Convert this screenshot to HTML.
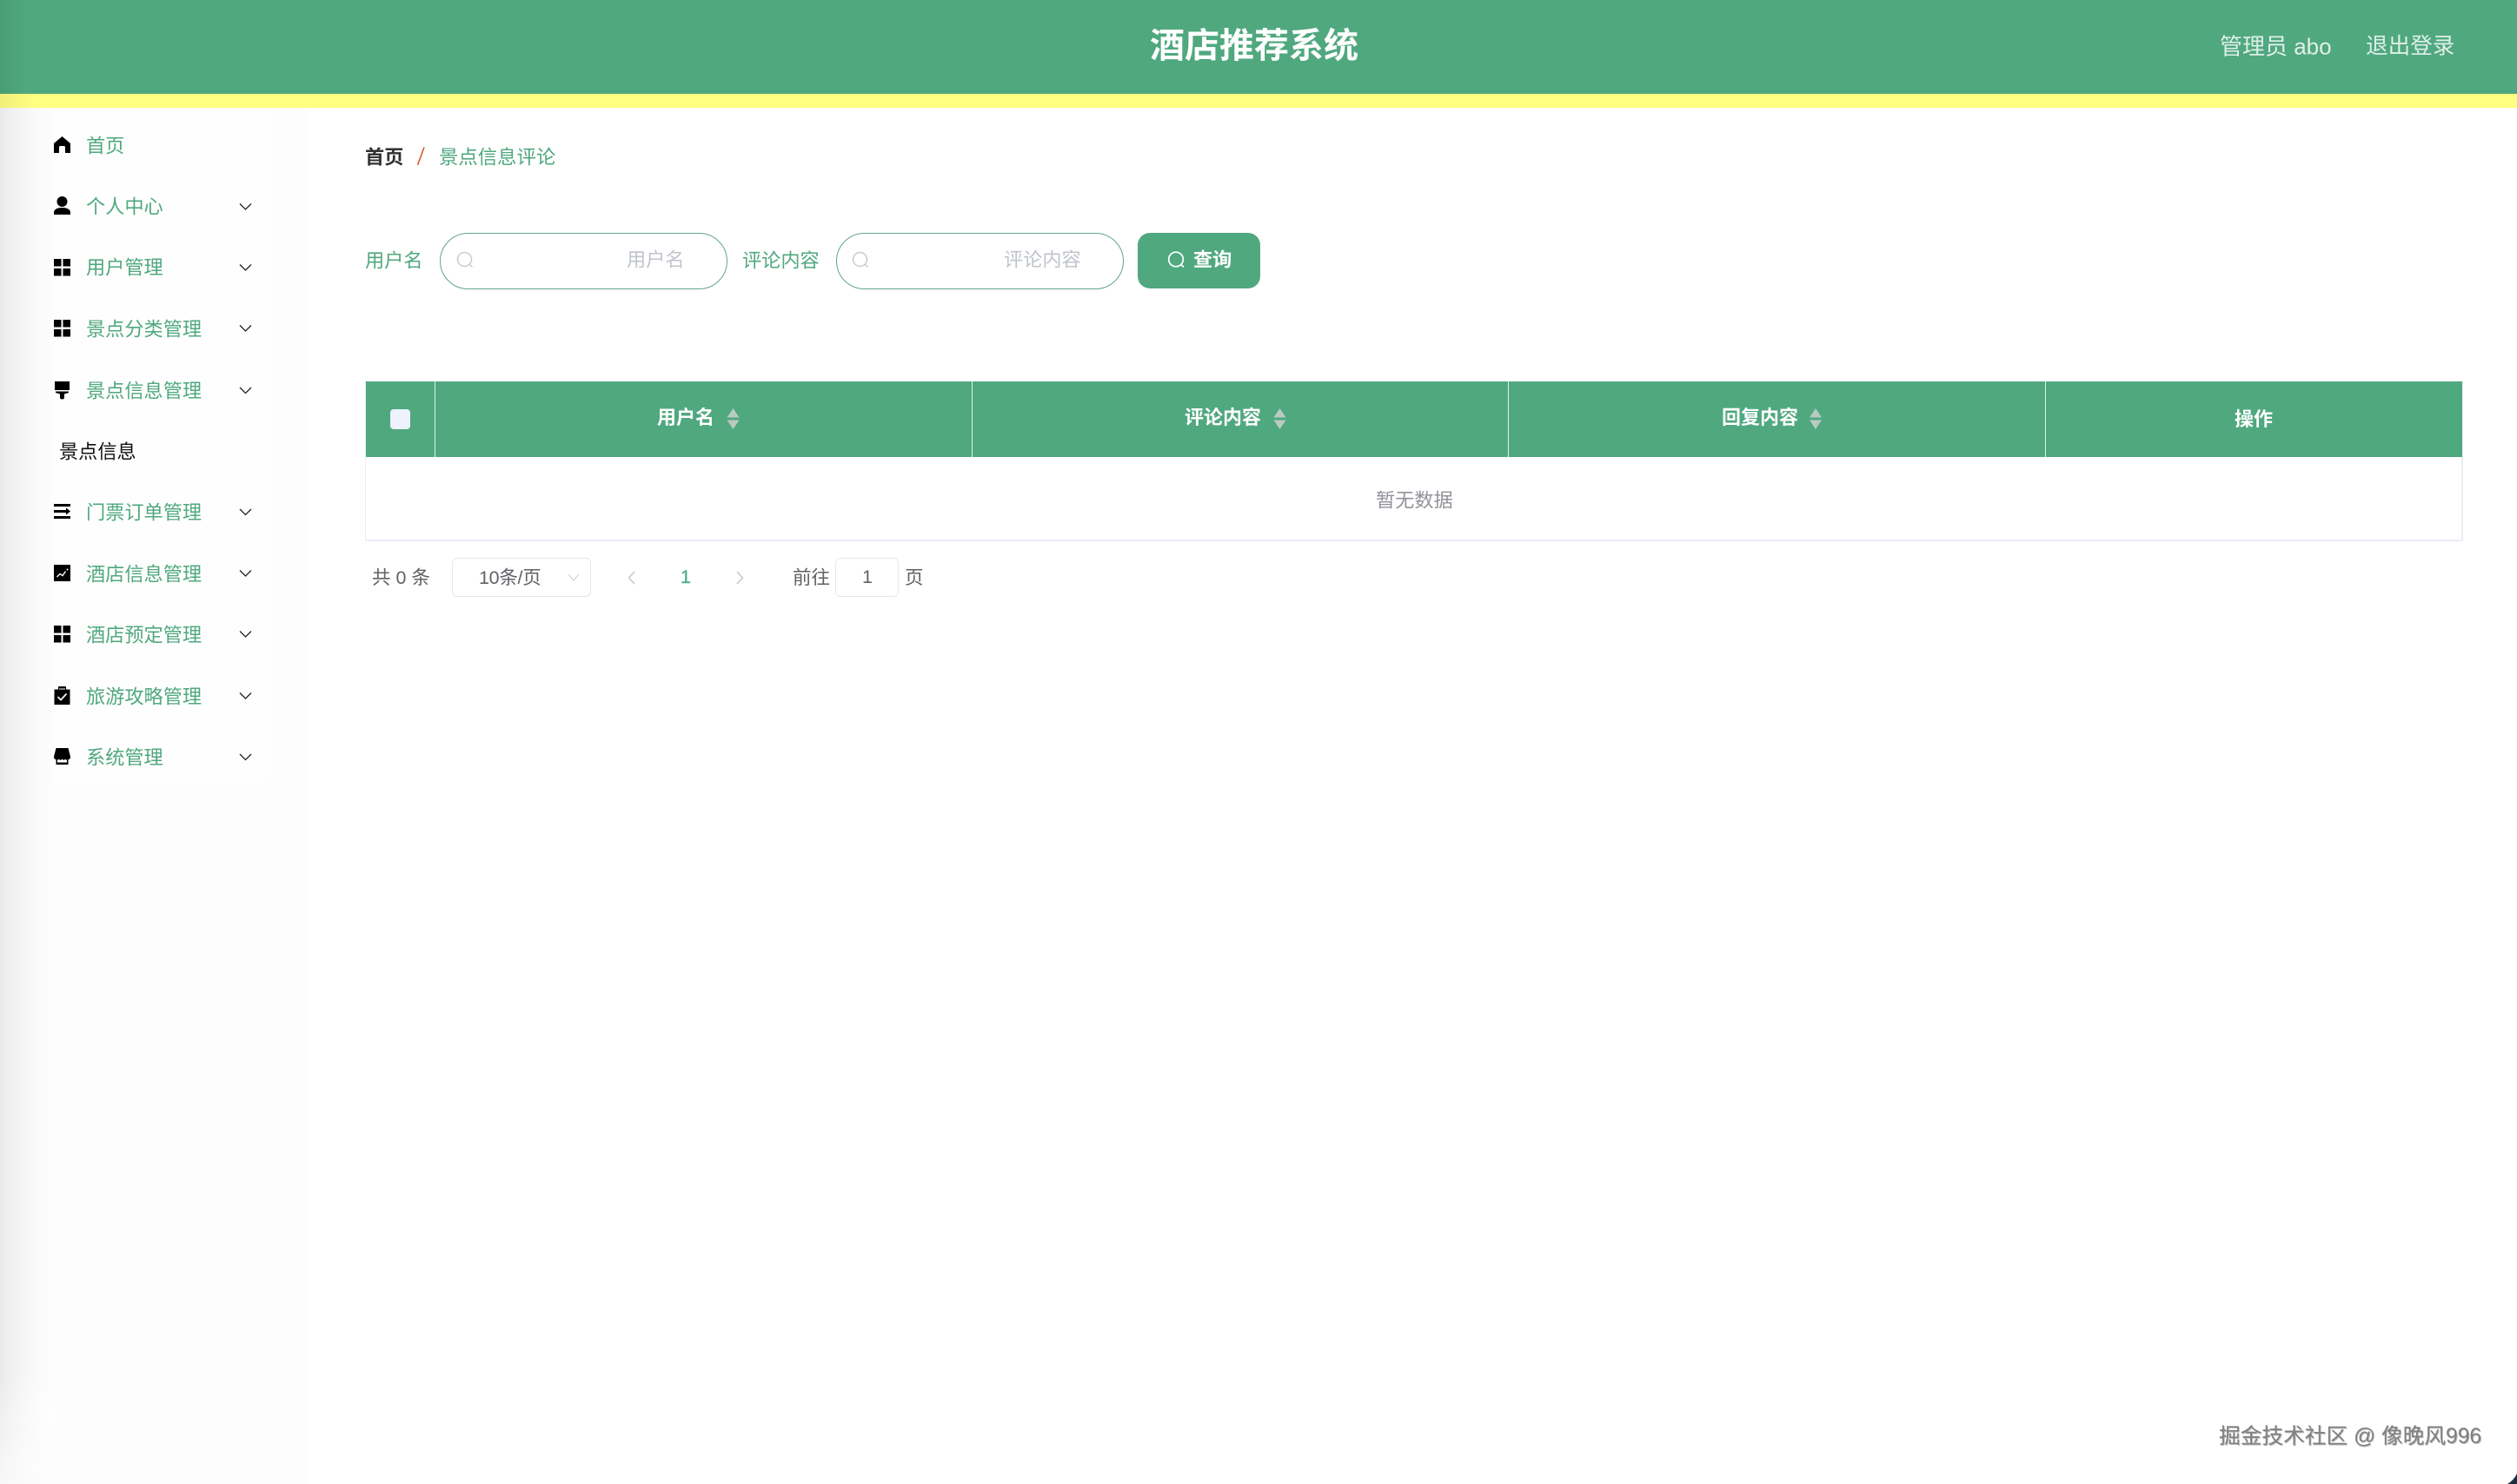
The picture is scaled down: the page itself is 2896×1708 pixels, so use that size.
<!DOCTYPE html>
<html lang="zh-CN">
<head>
<meta charset="utf-8">
<title>酒店推荐系统</title>
<style>
html,body{margin:0;padding:0;background:#fff}
body{position:relative;width:2896px;height:1708px;overflow:hidden;font-family:"Liberation Sans","Noto Sans CJK SC",sans-serif;background:#fdfdfd}
.t{position:absolute;white-space:nowrap;transform:translateY(calc(-50% + 2px));line-height:1.2}
.box{position:absolute;box-sizing:border-box}
svg{position:absolute;overflow:visible}
.m{left:99px;font-size:22.2px;color:#50a87f}
.th{color:#fff;font-weight:700;font-size:22px}
.g{font-size:21.5px;color:#606266}
</style>
</head>
<body>
<div class="box" style="left:0;top:124px;width:64px;height:1584px;background:linear-gradient(90deg,#e9e9e9 0,#f1f1f1 14px,#f8f8f8 34px,#fcfcfc 50px,#fdfdfd 64px);-webkit-mask-image:linear-gradient(180deg,#000 92%,rgba(0,0,0,.25) 100%)"></div>
<div class="box" style="left:60px;top:130px;width:250px;height:770px;background:#fefefe;border-radius:10px"></div>
<div class="box" style="left:355px;top:124px;width:2541px;height:1584px;background:#fff"></div>
<div class="box" style="left:0;top:0;width:2896px;height:108px;background:linear-gradient(90deg,#4a9d75 0,#50a87f 30px)"></div>
<div class="box" style="left:0;top:108px;width:2896px;height:16px;background:linear-gradient(90deg,#f2ee7a 0,#ffff80 40px)"></div>

<div class="t" style="left:1323px;top:51px;font-size:40px;font-weight:700;color:#fff">酒店推荐系统</div>
<div class="t" style="left:2554px;top:52px;font-size:26px;color:rgba(255,255,255,.82)">管理员 abo</div>
<div class="t" style="left:2722px;top:52px;font-size:25.6px;color:rgba(255,255,255,.82)">退出登录</div>

<!-- sidebar -->
<div class="t m" style="top:167px">首页</div>
<div class="t m" style="top:237px">个人中心</div>
<div class="t m" style="top:307px">用户管理</div>
<div class="t m" style="top:378px">景点分类管理</div>
<div class="t m" style="top:449px">景点信息管理</div>
<div class="t" style="left:68px;top:519px;font-size:22.2px;color:#111">景点信息</div>
<div class="t m" style="top:589px">门票订单管理</div>
<div class="t m" style="top:660px">酒店信息管理</div>
<div class="t m" style="top:730px">酒店预定管理</div>
<div class="t m" style="top:801px">旅游攻略管理</div>
<div class="t m" style="top:871px">系统管理</div>

<svg style="left:0;top:0" width="2896" height="1708" viewBox="0 0 2896 1708">
  <!-- home -->
  <path d="M71.5 157 L81 165 V176 H75 V169.500 Q75 168 73.500 168 H69.500 Q68 168 68 169.500 V176 H62 V165 Z" fill="#000"/>
  <!-- user -->
  <circle cx="71.500" cy="232" r="6" fill="#000"/>
  <path d="M62 247 V244.500 C62 240.500 67 239 71.500 239 C76 239 81 240.500 81 244.500 V247 Z" fill="#000"/>
  <!-- grids -->
  <g fill="#000">
    <rect x="62" y="298" width="8.500" height="8.500"/><rect x="72.500" y="298" width="8.500" height="8.500"/><rect x="62" y="309" width="8.500" height="8.500"/><rect x="72.500" y="309" width="8.500" height="8.500"/>
    <rect x="62" y="368" width="8.500" height="8.500"/><rect x="72.500" y="368" width="8.500" height="8.500"/><rect x="62" y="379" width="8.500" height="8.500"/><rect x="72.500" y="379" width="8.500" height="8.500"/>
    <rect x="62" y="720" width="8.500" height="8.500"/><rect x="72.500" y="720" width="8.500" height="8.500"/><rect x="62" y="731" width="8.500" height="8.500"/><rect x="72.500" y="731" width="8.500" height="8.500"/>
  </g>
  <!-- brush -->
  <path d="M63 439 H80 V449 H63 Z M64 450.500 H79 V452 L74 453.500 V457.500 Q74 459.500 71.500 459.500 Q69 459.500 69 457.500 V453.500 L64 452 Z" fill="#000"/>
  <!-- list -->
  <path d="M62 580 H81 V583 H62 Z M62 587 H76 V590 H62 Z M62 594 H81 V597 H62 Z M76 584.500 L81 588.500 L76 592.500 Z" fill="#000"/>
  <!-- chart -->
  <rect x="62" y="650" width="19" height="19" fill="#000"/>
  <path d="M65.500 664 L69 660.500 L72 662.500 L75.500 657.500" fill="none" stroke="#fff" stroke-width="1.400"/><circle cx="77.500" cy="655.500" r="1" fill="#fff"/>
  <!-- clipboard -->
  <path d="M62.500 793.500 H67 V790.500 Q67 790 68 790 H75 Q76 790 76 790.500 V793.500 H80.500 V811 H62.500 Z" fill="#000"/>
  <path d="M68 793 H75" stroke="#fff" stroke-width="1"/>
  <path d="M66.500 802 L70 805.500 L76.500 798.500" fill="none" stroke="#fff" stroke-width="1.700"/>
  <!-- store -->
  <path d="M64.500 861 H78.500 L81 871 Q81 874 78.500 874 V880 H64.500 V874 Q62 874 62 871 Z" fill="#000"/>
  <path d="M66 875 V877.500 H77 V875 Q75 873 73.500 875 Q71.500 873 69.500 875 Q67.500 873 66 875 Z" fill="#fff"/>
  <!-- chevrons -->
  <g fill="none" stroke="#222" stroke-width="1.300">
    <path d="M276 234.500 L282.500 241 L289 234.500"/>
    <path d="M276 304.500 L282.500 311 L289 304.500"/>
    <path d="M276 374.500 L282.500 381 L289 374.500"/>
    <path d="M276 446 L282.500 452.500 L289 446"/>
    <path d="M276 586 L282.500 592.500 L289 586"/>
    <path d="M276 656.500 L282.500 663 L289 656.500"/>
    <path d="M276 726.500 L282.500 733 L289 726.500"/>
    <path d="M276 797.500 L282.500 804 L289 797.500"/>
    <path d="M276 868 L282.500 874.500 L289 868"/>
  </g>
  <!-- corner -->
  <path d="M2896 1696 V1708 H2885 Q2892 1704 2896 1696 Z" fill="#1c3040"/>
</svg>

<!-- breadcrumb -->
<div class="t" style="left:420px;top:180px;font-size:22.200px;font-weight:700;color:#303133">首页</div>
<svg style="left:0;top:0" width="2896" height="1708" viewBox="0 0 2896 1708"><path d="M488 169.500 L480.500 190" stroke="#e0562c" stroke-width="1.600" fill="none"/></svg>
<div class="t" style="left:505px;top:180px;font-size:22.400px;color:#50a87f">景点信息评论</div>

<!-- search form -->
<div class="t" style="left:420px;top:299px;font-size:22.200px;color:#50a87f">用户名</div>
<div class="box" style="left:506px;top:268px;width:331px;height:64.500px;border:1.500px solid #5fa587;border-radius:33px;background:#fff"></div>
<div class="t" style="left:721px;top:298px;font-size:22.200px;color:#c0c4cc">用户名</div>
<div class="t" style="left:854px;top:299px;font-size:22.200px;color:#50a87f">评论内容</div>
<div class="box" style="left:962px;top:268px;width:331px;height:64.500px;border:1.500px solid #5fa587;border-radius:33px;background:#fff"></div>
<div class="t" style="left:1155px;top:298px;font-size:22.200px;color:#c0c4cc">评论内容</div>
<div class="box" style="left:1309px;top:268px;width:141px;height:64px;background:#50a87f;border-radius:14px"></div>
<svg style="left:0;top:0" width="2896" height="1708" viewBox="0 0 2896 1708">
  <g fill="none" stroke="#c8cbd0" stroke-width="1.500">
    <circle cx="534.500" cy="298.500" r="8"/><path d="M540.500 304.500 L543.500 307.500"/>
    <circle cx="989.500" cy="298.500" r="8"/><path d="M995.500 304.500 L998.500 307.500"/>
  </g>
  <g fill="none" stroke="#fff" stroke-width="1.700"><circle cx="1353" cy="298.500" r="8.300"/><path d="M1359 304.500 L1362 307.500"/></g>
</svg>
<div class="t" style="left:1373px;top:298px;font-size:22.200px;font-weight:700;color:#fff">查询</div>

<!-- table -->
<div class="box" style="left:420px;top:438px;width:2414px;height:185px;border-left:1px solid #ebeef5;border-right:2px solid #ebeef5;border-bottom:2px solid #ebeef5;background:#fff"></div>
<div class="box" style="left:421px;top:439px;width:2412px;height:87px;background:#50a87f"></div>
<div class="box" style="left:500px;top:439px;width:1px;height:87px;background:#e3f0ea"></div>
<div class="box" style="left:1118px;top:439px;width:1px;height:87px;background:#e3f0ea"></div>
<div class="box" style="left:1735px;top:439px;width:1px;height:87px;background:#e3f0ea"></div>
<div class="box" style="left:2353px;top:439px;width:1px;height:87px;background:#e3f0ea"></div>
<div class="box" style="left:449px;top:471px;width:23px;height:23px;background:#edf2fc;border-radius:4px"></div>
<svg style="left:0;top:0" width="2896" height="1708" viewBox="0 0 2896 1708"><g fill="#b9cac1">
<path d="M843.500 470 L850.500 480.500 H836.500 Z"/><path d="M836.500 483.500 H850.500 L843.500 494 Z"/>
<path d="M1472.500 470 L1479.500 480.500 H1465.500 Z"/><path d="M1465.500 483.500 H1479.500 L1472.500 494 Z"/>
<path d="M2089 470 L2096 480.500 H2082 Z"/><path d="M2082 483.500 H2096 L2089 494 Z"/></g></svg>
<div class="t th" style="left:756px;top:479px">用户名</div>
<div class="t th" style="left:1363px;top:479px">评论内容</div>
<div class="t th" style="left:1981px;top:479px">回复内容</div>
<div class="t th" style="left:2571px;top:481px">操作</div>
<div class="t" style="left:1583px;top:575px;font-size:22.200px;color:#909399">暂无数据</div>

<!-- pagination -->
<div class="t g" style="left:428px;top:664px">共 0 条</div>
<div class="box" style="left:520px;top:642px;width:160px;height:45px;border:1.500px solid #e4e7ed;border-radius:6px;background:#fff"></div>
<div class="t g" style="left:551px;top:664px;letter-spacing:-.3px">10条/页</div>
<div class="t" style="left:783px;top:663px;font-size:21.500px;color:#50b08a;-webkit-text-stroke:.4px #50b08a">1</div>
<div class="t g" style="left:912px;top:664px">前往</div>
<div class="box" style="left:961px;top:642px;width:73px;height:45px;border:1.500px solid #e4e7ed;border-radius:6px;background:#fff"></div>
<div class="t g" style="left:992px;top:663px">1</div>
<div class="t g" style="left:1041px;top:664px">页</div>
<svg style="left:0;top:0" width="2896" height="1708" viewBox="0 0 2896 1708"><g fill="none" stroke-width="1.300">
<path d="M730 658 L723.500 665 L730 672" stroke="#bfc2c8"/><path d="M848 658 L854.500 665 L848 672" stroke="#bfc2c8"/><path d="M654 661 L660 668 L666 661" stroke="#d5d7dc"/></g></svg>

<!-- watermark -->
<div class="t" style="left:2553px;top:1652px;font-size:24.700px;color:#808080;text-shadow:1px 1px 0 rgba(0,0,0,.28)">掘金技术社区 @ 像晚风996</div>
</body>
</html>
